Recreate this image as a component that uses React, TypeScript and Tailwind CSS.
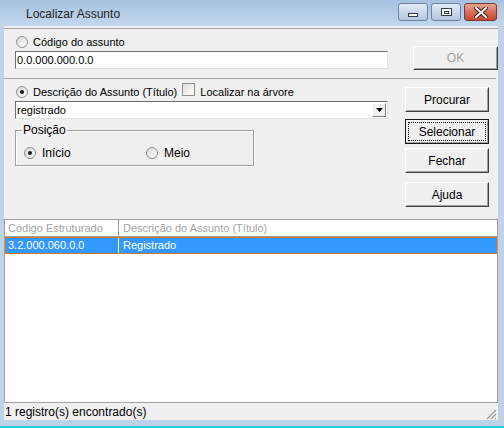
import React from "react";

const sans = "font-['Liberation_Sans',Arial,sans-serif]";

function Radio({ checked }: { checked?: boolean }) {
  return (
    <span className="relative inline-flex h-[12px] w-[12px] shrink-0 items-center justify-center rounded-full border border-[#8e8f8f] bg-gradient-to-br from-[#d6d6d6] to-[#ffffff]">
      {checked && <span className="h-[4px] w-[4px] rounded-full bg-[#1a1a1a]" />}
    </span>
  );
}

function Check() {
  return <span className="inline-block h-[13px] w-[13px] shrink-0 border border-[#8e8f8f] bg-gradient-to-br from-[#dcdcdc] to-[#ffffff]" />;
}

function Btn({ label, def, disabled, className }: { label: string; def?: boolean; disabled?: boolean; className?: string }) {
  return (
    <div
      className={`relative flex items-center justify-center border ${
        def ? "border-[#1a1a1a]" : "border-t-white border-l-white border-b-[#404040] border-r-[#404040]"
      } bg-[#f0f0f0] text-[12px] ${disabled ? "text-[#a0a0a0]" : "text-black"} ${className ?? ""}`}
    >
      <div className="flex h-full w-full items-center justify-center border border-t-transparent border-l-transparent border-b-[#a0a0a0] border-r-[#a0a0a0]">
        <span>{label}</span>
      </div>
      {def && <span className="absolute inset-[2px] border border-dotted border-black" />}
    </div>
  );
}

function CaptionBtn({ kind }: { kind: "min" | "max" | "close" }) {
  const close = kind === "close";
  return (
    <div
      className={`flex h-[18px] items-center justify-center rounded-[3px] border ${
        close
          ? "w-[33px] border-[#7a3a32] bg-gradient-to-b from-[#e8a493] via-[#d4705c] to-[#c5483a]"
          : "w-[30px] border-[#6e819a] bg-gradient-to-b from-[#e3ecf6] via-[#c9d8ea] to-[#b5c8df]"
      }`}
    >
      {kind === "min" && <span className="mt-[6px] h-[4px] w-[10px] border border-[#333c4a] bg-white" />}
      {kind === "max" && (
        <span className="flex h-[8px] w-[11px] items-center justify-center border border-[#333c4a] bg-white">
          <span className="h-[3px] w-[5px] border border-[#333c4a]" />
        </span>
      )}
      {close && (
        <svg width="14" height="11" viewBox="0 0 14 11">
          <path d="M2 1 L12 10 M12 1 L2 10" stroke="#4a1d18" strokeWidth="4" strokeLinecap="square" />
          <path d="M2 1 L12 10 M12 1 L2 10" stroke="#ffffff" strokeWidth="2" strokeLinecap="square" />
        </svg>
      )}
    </div>
  );
}

export default function App() {
  return (
    <div className={`flex h-[428px] w-[504px] flex-col bg-[#bcd3ea] ${sans}`}>
      {/* title bar */}
      <div className="flex h-[26px] shrink-0 items-center bg-gradient-to-b from-[#a7c2e1] to-[#c2d7ed] pr-[7px]">
        <span className="ml-[26px] flex-1 pt-[2px] text-[12px] text-[#1e1e1e]">Localizar Assunto</span>
        <div className="mb-[2px] flex gap-[3px]">
          <CaptionBtn kind="min" />
          <CaptionBtn kind="max" />
          <CaptionBtn kind="close" />
        </div>
      </div>

      <div className="ml-[4px] mr-[6px] flex h-[394px] flex-col bg-[#f0f0f0] text-[11px] text-black">
        {/* codigo */}
        <div className="mt-[2px] flex h-[50px] shrink-0 border-t border-[#a0a0a0]">
          <div className="ml-[11px] w-[373px]">
            <div className="mt-[6px] flex h-[14px] items-center gap-[5px] pl-[1px]">
              <Radio />
              <span>Código do assunto</span>
            </div>
            <div className="mt-[2px] flex h-[18px] items-center border border-t-[#6d6d6d] border-l-[#6d6d6d] border-b-[#e3e3e3] border-r-[#e3e3e3] bg-white pl-[1px]">
              0.0.000.000.0.0
            </div>
          </div>
          <Btn label="OK" disabled className="ml-[25px] mt-[17px] h-[24px] w-[85px]" />
        </div>

        {/* descricao */}
        <div className="mr-[2px] flex h-[141px] shrink-0 border-t border-[#a0a0a0]">
          <div className="ml-[11px] w-[373px]">
            <div className="mt-[6px] flex h-[14px] items-center pl-[1px]">
              <Radio checked />
              <span className="ml-[5px]">Descrição do Assunto (Título)</span>
              <span className="ml-[5px]">
                <Check />
              </span>
              <span className="ml-[5px]">Localizar na árvore</span>
            </div>
            <div className="mt-[2px] flex h-[18px] items-center border border-t-[#6d6d6d] border-l-[#6d6d6d] border-b-[#e3e3e3] border-r-[#e3e3e3] bg-white pl-[1px]">
              <span className="flex-1">registrado</span>
              <span className="mr-[1px] flex h-[14px] w-[14px] items-center justify-center border border-t-white border-l-white border-b-[#808080] border-r-[#808080] bg-[#f0f0f0]">
                <svg width="7" height="4" viewBox="0 0 7 4">
                  <path d="M0 0 H7 L3.5 4 Z" fill="#000" />
                </svg>
              </span>
            </div>
            <div className="relative mt-[11px] h-[36px] w-[239px] border border-[#a0a0a0] shadow-[inset_1px_1px_0_#ffffff,1px_1px_0_#ffffff]">
              <span className="absolute -top-[8px] left-[6px] bg-[#f0f0f0] px-[1px] text-[12px] leading-[14px]">Posição</span>
              <div className="mt-[13px] flex items-center pl-[8px]">
                <Radio checked />
                <span className="ml-[6px] w-[104px] text-[12px]">Início</span>
                <Radio />
                <span className="ml-[6px] text-[12px]">Meio</span>
              </div>
            </div>
          </div>
          <div className="ml-[17px] flex w-[84px] flex-col">
            <Btn label="Procurar" className="mt-[8px] h-[25px]" />
            <Btn label="Selecionar" def className="mt-[7px] h-[25px]" />
            <Btn label="Fechar" className="mt-[4px] h-[25px]" />
            <Btn label="Ajuda" className="mt-[9px] h-[25px]" />
          </div>
        </div>

        {/* list */}
        <div className="flex flex-1 flex-col border border-t-[#a0a0a0] border-l-[#a0a0a0] border-r-[#a0a0a0] border-b-transparent bg-white">
          <div className="flex h-[17px] items-center border-b border-[#a0a0a0] text-[#a5a5a5]">
            <span className="w-[113px] pl-[3px]">Código Estruturado</span>
            <span className="h-full w-px bg-[#a0a0a0]" />
            <span className="pl-[4px]">Descrição do Assunto (Título)</span>
          </div>
          <div className="flex h-[17px] items-center border border-[#d5771e] bg-[#3399ff] text-white">
            <span className="w-[112px] pl-[2px]">3.2.000.060.0.0</span>
            <span className="h-full w-px bg-white" />
            <span className="pl-[4px]">Registrado</span>
          </div>
        </div>

        {/* status */}
        <div className="flex h-[18px] shrink-0 items-center border-t border-[#a0a0a0] bg-[#f0f0f0] pl-[1px] text-[12px]">
          <span className="flex-1">1 registro(s) encontrado(s)</span>
          <svg width="12" height="12" viewBox="0 0 12 12" className="mr-[1px] mt-[4px]">
            <path d="M11 2 L2 11 M11 6 L6 11 M11 10 L10 11" stroke="#a0a0a0" strokeWidth="1.2" />
            <path d="M12 3 L3 12 M12 7 L7 12" stroke="#ffffff" strokeWidth="1" />
          </svg>
        </div>
      </div>
      <div className="mt-auto h-[2px] bg-[#2ec4e6]" />
    </div>
  );
}
